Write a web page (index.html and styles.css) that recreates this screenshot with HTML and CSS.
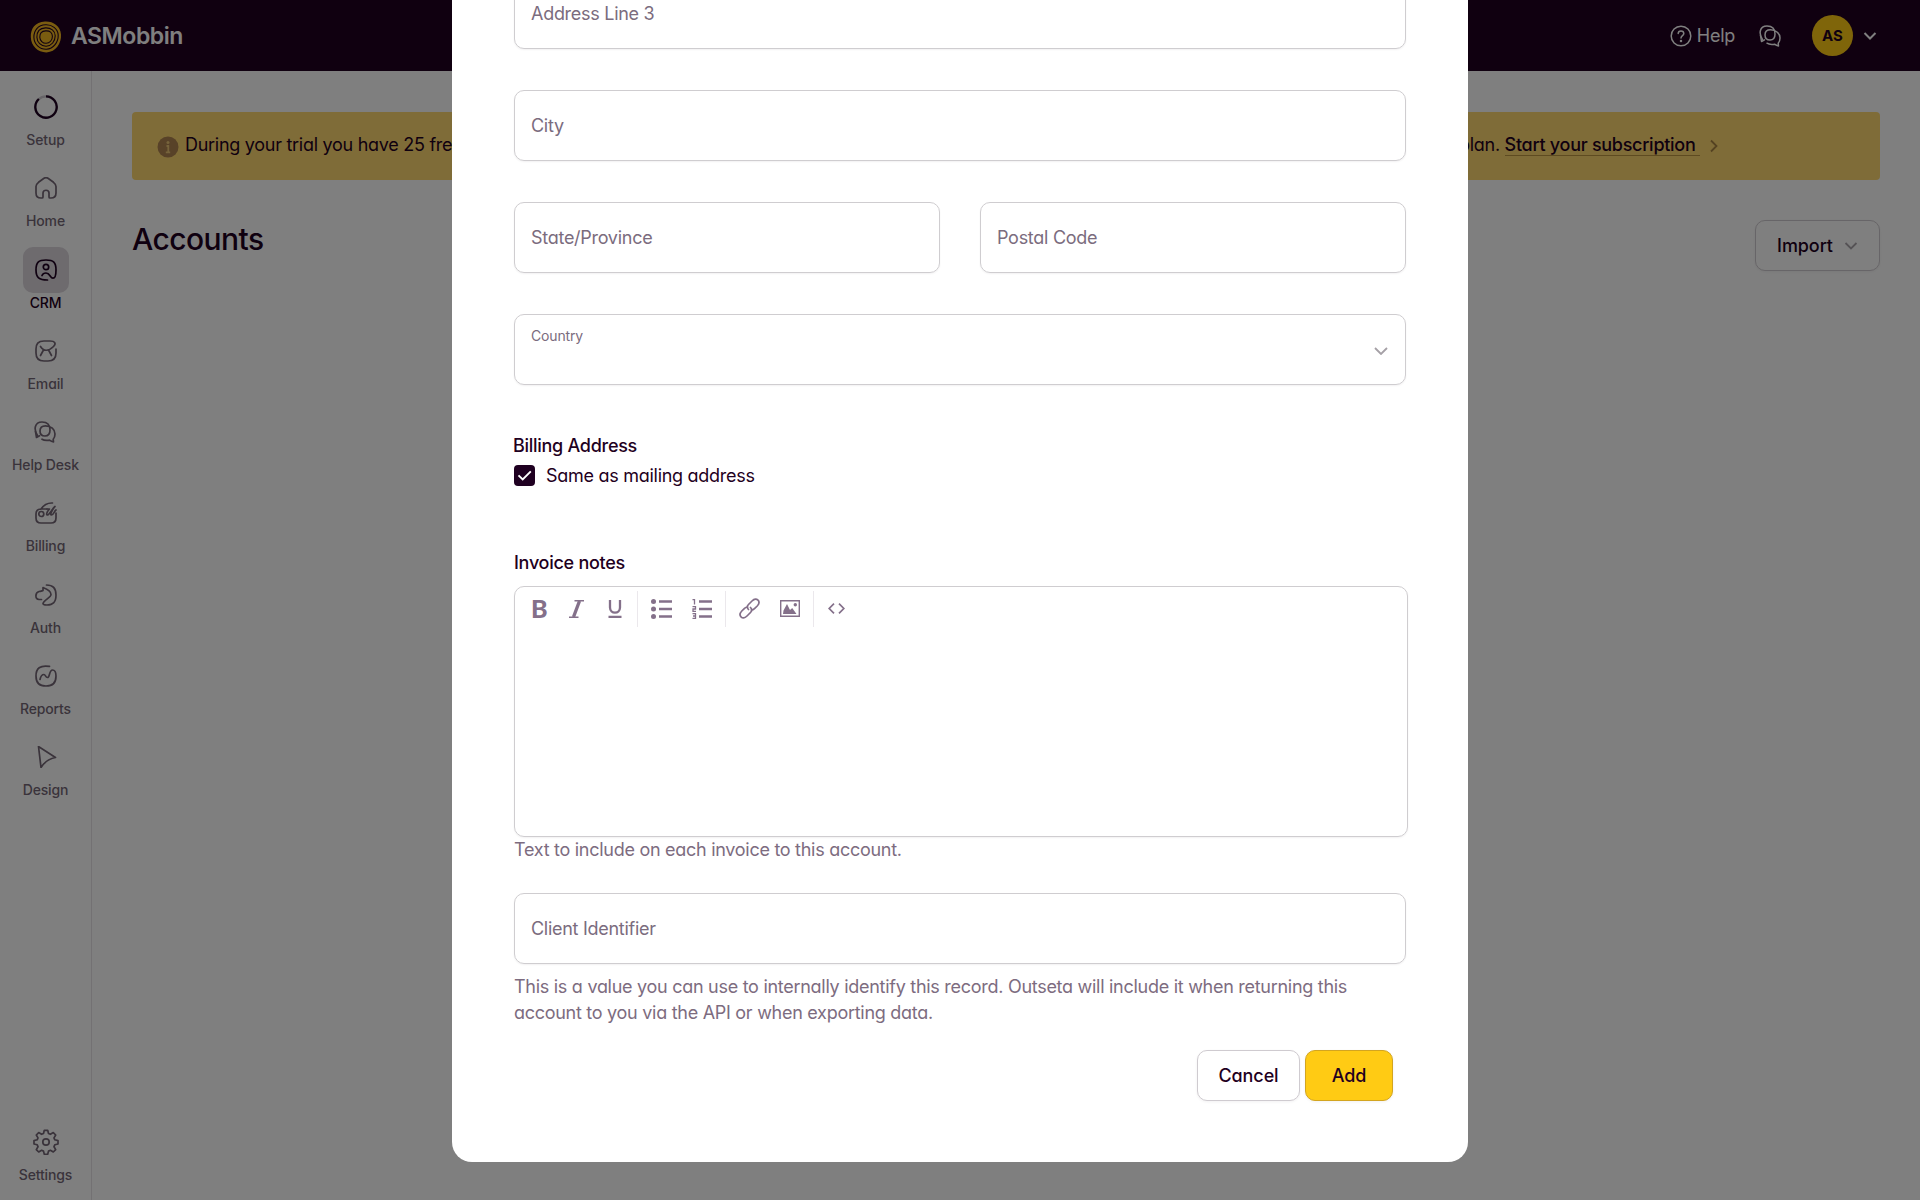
FILE: index.html
```
<!DOCTYPE html>
<html lang="en">
<head>
    <meta charset="UTF-8">
    <title>Accounts</title>
    <link rel="stylesheet" href="styles.css">
</head>
<body>

    <header class="topbar">
        <div class="brand">
            <svg class="brand-logo" viewBox="0 0 32 32" fill="none" stroke="#1f0021" stroke-width="1.1">
                <path d="M15 .6C23 .2 30.500 5 31 13.500C31.600 22 26 31 16.500 31.400C8 31.500 1 25 .8 16C.6 8 5 1 15 .6Z" fill="#f5b921" stroke="none"/>
                <path d="M15.500 3.800C22 3.500 27.800 7.500 28.200 14C28.500 21 23.500 28 16.300 28.200C9.500 28.300 4 23 3.900 16.200C3.800 9.500 8 4 15.500 3.800Z"/>
                <path d="M15.500 6.900C21 6.700 25.100 9.700 25.200 14.800C25.300 20.300 21.300 25 16.200 25.200C11 25.300 7 21.300 6.900 16.300C6.800 11 9.500 7.100 15.500 6.900Z"/>
                <path d="M15.600 9.900C20 9.600 22.300 11.700 22.400 15.200C22.500 19.300 19.500 22.200 16.200 22.300C12.700 22.400 9.900 19.600 9.800 16.200C9.700 12.700 11.500 10.100 15.600 9.900Z"/>
            </svg>
            <span>ASMobbin</span>
        </div>
        <div class="topbar-right">
            <a class="help">
                <svg class="icon-22" viewBox="0 0 22 22" fill="none" stroke="currentColor" stroke-width="1.5" stroke-linecap="round">
                    <circle cx="11" cy="11" r="9.800"/>
                    <path d="M8.200 8.500C8.200 5 13.800 5 13.800 8.500C13.800 10.700 11 10.600 11 13"/>
                    <circle cx="11" cy="16" r=".5" fill="currentColor"/>
                </svg>
                Help
            </a>
            <svg class="icon-22" viewBox="0 0 22 22" fill="none" stroke="currentColor" stroke-width="1.500" stroke-linecap="round" stroke-linejoin="round">
                <use href="#chat"/>
            </svg>
            <div class="user">
                <span class="avatar">AS</span>
                <svg class="chevron" viewBox="0 0 14 8" fill="none" stroke="currentColor" stroke-width="2"><path d="M1.500 1L7 6.500L12.500 1"/></svg>
            </div>
        </div>
    </header>

    <div class="layout">
        <nav class="sidebar">
            <a class="nav-item">
                <span class="nav-icon nav-progress">
                    <svg class="icon-24" viewBox="0 0 24 24">
                        <circle cx="12" cy="12" r="10.700" stroke="#cfcad0"/>
                        <path d="M12 1.300A10.700 10.700 0 1 1 4.900 4" stroke="#1f0021"/>
                    </svg>
                </span>
                Setup
            </a>
            <a class="nav-item">
                <span class="nav-icon">
                    <svg class="icon-22" viewBox="0 0 22 22">
                        <path d="M1 9.500C1 7.500 2 6.500 3.500 5.300L9 1.300C10.500 .3 11.500 .3 13 1.300L18.500 5.300C20 6.500 21 7.500 21 9.500V16C21 19.500 19 21 16 21H15C14.300 21 14 20.700 14 20V16C14 12.300 8 12.300 8 16V20C8 20.700 7.700 21 7 21H6C3 21 1 19.500 1 16Z"/>
                    </svg>
                </span>
                Home
            </a>
            <a class="nav-item active">
                <span class="nav-icon">
                    <svg class="icon-22" viewBox="0 0 22 22">
                        <circle cx="11" cy="8" r="2.700"/>
                        <path d="M12.500 21C4 21 1 18.500 1 11C1 3.500 3.500 1 11 1C18.500 1 21 3.500 21 11C21 16 20 19.200 18 19.200C15 19.200 15.300 14 11 14C8.800 14 7.600 15 7 16.500"/>
                    </svg>
                </span>
                CRM
            </a>
            <a class="nav-item">
                <span class="nav-icon">
                    <svg class="icon-22" viewBox="0 0 22 22">
                        <path d="M5.500 6.500C8.500 11.500 13.500 11.500 18.500 6.500C21.500 3.500 20 1 15 1H9C3 1 1 4 1 9V13C1 18.500 3.500 21 9 21H13C18.500 21 21 18.500 21 13V9"/>
                        <path d="M5.500 15.500L8.500 10M16.500 15.500L13.500 10"/>
                    </svg>
                </span>
                Email
            </a>
            <a class="nav-item">
                <span class="nav-icon">
                    <svg class="icon-22" viewBox="0 0 22 22">
                        <g id="chat">
                            <path d="M3.500 14.500C-.5 8.500 .5 1 8 1C13 1 16 4 16 9C16 12.800 14 15 11 15C8 15 6 13 6 10C6 6.800 8.200 4.800 11.500 4.800C17 4.800 21 8.500 21 13C21 15.500 20.300 17 19.200 18.200L19.500 21C17.800 20.800 16.500 20 15.500 19.200C12 19.700 9.500 19.200 8 18.200"/>
                            <path d="M1.500 10.500L2.500 16.500L5.500 14.800"/>
                        </g>
                    </svg>
                </span>
                Help Desk
            </a>
            <a class="nav-item">
                <span class="nav-icon">
                    <svg class="icon-22" viewBox="0 0 22 22">
                        <circle cx="6.300" cy="12" r="2.500"/>
                        <path d="M17.500 1C12 .7 9 2.500 6 7M12 7H6C2.500 7 1 9 1 12V16C1 19.500 3 21 6 21H16C19.500 21 21 19.500 21 16V11"/>
                        <path d="M12 7H14.500C12 9.500 10.800 13 12.300 13C14.500 13 17 7 20 4.500C17 8 14.500 13 16.500 13C18.500 13 19 9.500 21 8"/>
                    </svg>
                </span>
                Billing
            </a>
            <a class="nav-item">
                <span class="nav-icon">
                    <svg class="icon-22" viewBox="0 0 22 22">
                        <path d="M6.500 15.500H4C-.3 15.500 0 8.500 4 7.500C5.500 7.200 7 7.200 8 6.500V3.500C12 5 16 8 16 10.500C16 13.500 9 16 8 19.500C8 21 10 21 12 21C18.500 21 21 18 21 11C21 4 18 1 11.500 1"/>
                    </svg>
                </span>
                Auth
            </a>
            <a class="nav-item">
                <span class="nav-icon">
                    <svg class="icon-22" viewBox="0 0 22 22">
                        <path d="M14.500 1.400C5 -.2 1 3.500 1 11C1 18 4 21 11 21C18 21 21 18 21 11C21 7 19.500 5 17.500 5C14 5 15 12.500 12.500 12.500C10.500 12.500 10.500 9.500 9 9.500C7 9.500 5.500 12 5 14.500"/>
                    </svg>
                </span>
                Reports
            </a>
            <a class="nav-item">
                <span class="nav-icon">
                    <svg class="icon-22" viewBox="0 0 22 22">
                        <path d="M3.500 .5L20.500 11.500C14 12.500 9.500 16 6 21.500Z"/>
                    </svg>
                </span>
                Design
            </a>
            <a class="nav-item nav-bottom">
                <span class="nav-icon">
                    <svg class="icon-26" viewBox="0 0 26 26">
                        <circle cx="13" cy="13" r="3.200"/>
                        <path d="M11.300 1.300h3.400l.8 3.200 1.900.8 2.900-1.700 2.400 2.400-1.700 2.900.8 1.900 3.200.8v3.400l-3.200.8-.8 1.900 1.700 2.900-2.400 2.400-2.900-1.700-1.900.8-.8 3.200h-3.400l-.8-3.200-1.900-.8-2.900 1.700-2.400-2.400 1.700-2.900-.8-1.900-3.200-.8v-3.400l3.200-.8.8-1.900-1.700-2.900 2.400-2.400 2.900 1.700 1.900-.8z"/>
                    </svg>
                </span>
                Settings
            </a>
        </nav>

        <main class="content">
            <div class="banner">
                <svg class="banner-info" viewBox="0 0 22 22">
                    <circle cx="11" cy="11" r="10.500" fill="#b08450"/>
                    <circle cx="11" cy="6.500" r="1.500" fill="#ecc777"/>
                    <path d="M9.500 10H11.300V16M8.800 16.300H13.200" fill="none" stroke="#ecc777" stroke-width="1.800"/>
                </svg>
                <span>During your trial you have 25 free</span>
                <span class="banner-end">plan. <a class="banner-link">Start your subscription&nbsp;</a></span>
                <svg class="banner-arrow" viewBox="0 0 8 14" fill="none" stroke="#a98443" stroke-width="1.800"><path d="M1 1.500L6.500 7L1 12.500"/></svg>
            </div>
            <div class="page-head">
                <h1>Accounts</h1>
                <button class="btn btn-import">Import
                    <svg class="chevron-sm" viewBox="0 0 14 8" fill="none" stroke="#aaa5ab" stroke-width="1.800"><path d="M1.500 1L7 6.500L12.500 1"/></svg>
                </button>
            </div>
        </main>
    </div>

    <div class="overlay">
        <form class="modal">
            <div class="field">Address Line 3</div>
            <div class="field">City</div>
            <div class="field-row">
                <div class="field">State/Province</div>
                <div class="field">Postal Code</div>
            </div>
            <div class="field field-select">
                <span class="field-label">Country</span>
                <svg class="chevron" viewBox="0 0 14 8" fill="none" stroke="#a5a0a6" stroke-width="1.800"><path d="M1 1L7 7L13 1"/></svg>
            </div>

            <h2 class="section-title billing-title">Billing Address</h2>
            <label class="check">
                <span class="check-box">
                    <svg viewBox="0 0 21 21" fill="none" stroke="#fff" stroke-width="1.900"><path d="M4.500 10.300L8.700 14.500L16.800 6.300"/></svg>
                </span>
                Same as mailing address
            </label>

            <h2 class="section-title notes-title">Invoice notes</h2>
            <div class="editor">
                <div class="toolbar">
                    <span class="tool tool-bold">B</span>
                    <svg class="tool tool-italic" viewBox="0 0 15 18" fill="none" stroke="currentColor">
                        <path d="M5.500 .8H15M0 17.200H9.500" stroke-width="1.600"/>
                        <path d="M10.500 1L4.500 17" stroke-width="3.400"/>
                    </svg>
                    <svg class="tool tool-underline" viewBox="0 0 14 18" fill="none" stroke="currentColor" stroke-width="2.300">
                        <path d="M2 0V7.500C2 14.200 12 14.200 12 7.500V0M.5 16.800H13.500"/>
                    </svg>
                    <span class="divider"></span>
                    <svg class="tool tool-list" viewBox="0 0 21 20" fill="currentColor">
                        <circle cx="2.500" cy="2.500" r="2.500"/><circle cx="2.500" cy="10" r="2.500"/><circle cx="2.500" cy="17.500" r="2.500"/>
                        <path d="M8 1.300h13v2.500H8zM8 8.800h13v2.500H8zM8 16.300h13v2.500H8z"/>
                    </svg>
                    <svg class="tool tool-ordered" viewBox="0 0 20 20" fill="none" stroke="currentColor">
                        <path d="M7 2.500H20M7 10H20M7 17.500H20" stroke-width="2.500"/>
                        <path d="M.5 .7H2.500V5.500M.5 7.700H3.500V10H1V12.300H4M.5 14.700H3.500V19.300H.5M1 17H3.500" stroke-width="1.300"/>
                    </svg>
                    <span class="divider"></span>
                    <svg class="tool tool-link" viewBox="0 0 21 21" fill="none" stroke="currentColor" stroke-width="1.700" stroke-linecap="round">
                        <path d="M9.500 11.500C7.500 9.500 8 8 9.500 6.500L13 3C15.500 .5 17.500 .7 19 2.200C20.500 3.700 20.500 5.500 18.200 8L15.500 10.700C14.500 11.700 13.500 12 12.500 12"/>
                        <path d="M11.500 9.500C13.500 11.500 13 13 11.500 14.500L8 18C5.500 20.500 3.500 20.300 2 18.800C.5 17.300 .5 15.500 2.800 13L5.500 10.300C6.500 9.300 7.500 9 8.500 9"/>
                    </svg>
                    <svg class="tool tool-image" viewBox="0 0 20 17">
                        <path d="M.7 .7H19.300V16.300H.7Z" fill="none" stroke="currentColor" stroke-width="1.400"/>
                        <path d="M3 14L3.500 10.500L7 4L10 10L12.200 8L16.500 14Z" fill="currentColor"/>
                        <circle cx="15.300" cy="4.700" r="1.700" fill="currentColor"/>
                    </svg>
                    <span class="divider"></span>
                    <svg class="tool tool-code" viewBox="0 0 17 11" fill="none" stroke="currentColor" stroke-width="1.700">
                        <path d="M6 .7L1.200 5.500L6 10.300M11 .7L15.800 5.500L11 10.300"/>
                    </svg>
                </div>
            </div>
            <p class="hint">Text to include on each invoice to this account.</p>

            <div class="field field-client">Client Identifier</div>
            <p class="hint hint-client">This is a value you can use to internally identify this record. Outseta will include it when returning this account to you via the API or when exporting data.</p>

            <div class="actions">
                <button type="button" class="btn btn-cancel">Cancel</button>
                <button type="button" class="btn btn-add">Add</button>
            </div>
        </form>
    </div>

</body>
</html>
```
FILE: styles.css
```
* {
    box-sizing: border-box;
}

body {
    margin: 0;
    height: 100vh;
    overflow: hidden;
    display: flex;
    flex-direction: column;
    font-family: Inter, sans-serif;
    font-feature-settings: "cv11";
    font-size: 18px;
    letter-spacing: -0.28px;
    line-height: 25.5px;
    color: #1f0021;
    background: #fff;
}

h1, h2, p {
    margin: 0;
}

svg {
    display: block;
    flex: none;
}

.icon-22 { width: 22px; height: 22px; }
.icon-24 { width: 24px; height: 24px; }
.icon-26 { width: 26px; height: 26px; }

/* header */
.topbar {
    height: 71px;
    flex: none;
    display: flex;
    justify-content: space-between;
    align-items: center;
    padding: 0 43px 0 30px;
    background: #200020;
    color: #fff;
}

.brand {
    display: flex;
    align-items: center;
    gap: 9px;
    padding-top: 2px;
    font-size: 23px;
    font-weight: 600;
    letter-spacing: -0.45px;
}

.brand-logo {
    width: 32px;
    height: 32px;
}

.topbar-right {
    display: flex;
    align-items: center;
}

.help {
    display: flex;
    align-items: center;
    gap: 5px;
    margin-right: 24px;
}

.user {
    display: flex;
    align-items: center;
    gap: 10px;
    margin-left: 31px;
}

.avatar {
    width: 41px;
    height: 41px;
    border-radius: 50%;
    background: #ffcb14;
    color: #1f0021;
    font-size: 15px;
    font-weight: 700;
    letter-spacing: 0;
    display: flex;
    align-items: center;
    justify-content: center;
}

.chevron {
    width: 14px;
    height: 8px;
}

.chevron-sm {
    width: 14px;
    height: 8px;
}

/* sidebar */
.layout {
    flex: 1;
    display: flex;
}

.sidebar {
    width: 92px;
    flex: none;
    display: flex;
    flex-direction: column;
    align-items: center;
    padding: 13px 0 15px;
    border-right: 1px solid #e6e2e7;
}

.nav-item {
    display: flex;
    flex-direction: column;
    align-items: center;
    height: 81.250px;
    font-size: 14px;
    font-weight: 500;
    letter-spacing: -0.15px;
    line-height: 20px;
    color: #746776;
}

.nav-icon {
    width: 46px;
    height: 46px;
    border-radius: 10px;
    display: flex;
    align-items: center;
    justify-content: center;
}

.nav-icon svg {
    fill: none;
    stroke: currentColor;
    stroke-width: 1.7;
    stroke-linecap: round;
    stroke-linejoin: round;
}

.nav-progress svg {
    stroke-width: 2.3;
    stroke-linecap: butt;
}

.nav-item.active {
    color: #1f0021;
}

.nav-item.active .nav-icon {
    background: #dcd6dd;
}

.nav-bottom {
    margin-top: auto;
    height: auto;
}

/* page */
.content {
    flex: 1;
    padding: 41px 40px 0 40px;
}

.banner {
    height: 68px;
    display: flex;
    align-items: center;
    padding: 0 162px 2px 25px;
    border-radius: 4px;
    background: #ffd970;
}

.banner-info {
    width: 22px;
    height: 22px;
    margin: 3px 6px 0 0;
}

.banner-end {
    margin-left: auto;
}

.banner-link {
    font-weight: 500;
    border-bottom: 1px solid #bd9643;
}

.banner-arrow {
    width: 8px;
    height: 14px;
    margin: 2px 0 0 10px;
}

.page-head {
    display: flex;
    justify-content: space-between;
    margin-top: 40px;
}

h1 {
    font-size: 30px;
    font-weight: 450;
    letter-spacing: -0.55px;
    line-height: 38px;
}

.btn {
    height: 51px;
    border: 1px solid #cfcbd0;
    border-radius: 10px;
    background: #fff;
    color: #1f0021;
    font: 500 18px Inter, sans-serif;
    font-feature-settings: "cv11";
    letter-spacing: -0.08px;
    box-shadow: 0 1px 3px rgba(31, 0, 33, 0.06);
}

.btn-import {
    width: 125px;
    display: flex;
    align-items: center;
    justify-content: center;
    gap: 11px;
}

/* modal */
.overlay {
    position: fixed;
    inset: 0;
    display: flex;
    align-items: flex-end;
    justify-content: center;
    padding-bottom: 38px;
    background: rgba(0, 0, 0, 0.5);
}

.modal {
    width: 1016px;
    padding: 40px 62px 61px;
    border-radius: 20px;
    background: #fff;
}

.field {
    height: 71px;
    margin-bottom: 41px;
    padding: 2px 16px 0;
    display: flex;
    align-items: center;
    flex: 1;
    border: 1px solid #cfcdd0;
    border-radius: 10px;
    box-shadow: 0 1px 2px rgba(31, 0, 33, 0.06);
    color: #7b6c7e;
}

.field-row {
    display: flex;
    gap: 40px;
}

.field-select {
    justify-content: space-between;
    padding: 0 17px 0 16px;
    margin-bottom: 48px;
}

.field-select .chevron {
    margin-top: 3px;
}

.field-label {
    align-self: flex-start;
    margin-top: 8px;
    font-size: 14px;
    letter-spacing: -0.15px;
}

.section-title {
    font-size: 18px;
    font-weight: 500;
}

.billing-title {
    margin-left: -1px;
}

.check {
    display: flex;
    align-items: center;
    gap: 11px;
    height: 35px;
}

.check-box {
    width: 21px;
    height: 21px;
    border-radius: 4px;
    background: #1f0021;
}

.notes-title {
    margin-top: 57px;
}

.editor {
    width: 894px;
    height: 251px;
    margin-top: 10px;
    border: 1px solid #cfcdd0;
    border-radius: 10px;
    box-shadow: 0 1px 2px rgba(31, 0, 33, 0.06);
}

.toolbar {
    display: flex;
    align-items: center;
    height: 36px;
    margin-top: 4px;
    padding-left: 16px;
    color: #84708a;
}

.tool-bold {
    width: 14px;
    margin-right: 24px;
    font-family: Lato, sans-serif;
    font-size: 25px;
    font-weight: 900;
    letter-spacing: 0;
}

.tool-italic { width: 15px; height: 18px; margin-right: 24px; }
.tool-underline { width: 14px; height: 18px; margin-right: 15px; }
.tool-list { width: 21px; height: 20px; margin: 0 20px 0 13px; }
.tool-ordered { width: 20px; height: 20px; margin-right: 13px; }
.tool-link { width: 21px; height: 21px; margin: 0 20px 0 13px; }
.tool-image { width: 20px; height: 17px; margin-right: 13px; }
.tool-code { width: 17px; height: 11px; margin-left: 14px; }

.divider {
    width: 1px;
    height: 36px;
    background: #ebe8ec;
}

.hint {
    color: #7d6c80;
}

.field-client {
    margin: 31px 0 10px;
    padding-top: 0;
}

.hint-client {
    width: 860px;
}

.actions {
    display: flex;
    justify-content: flex-end;
    gap: 5px;
    margin-top: 25px;
    padding-right: 13px;
}

.btn-cancel {
    width: 103px;
}

.btn-add {
    width: 88px;
    background: #ffcb14;
    border-color: #d3a520;
}
```
